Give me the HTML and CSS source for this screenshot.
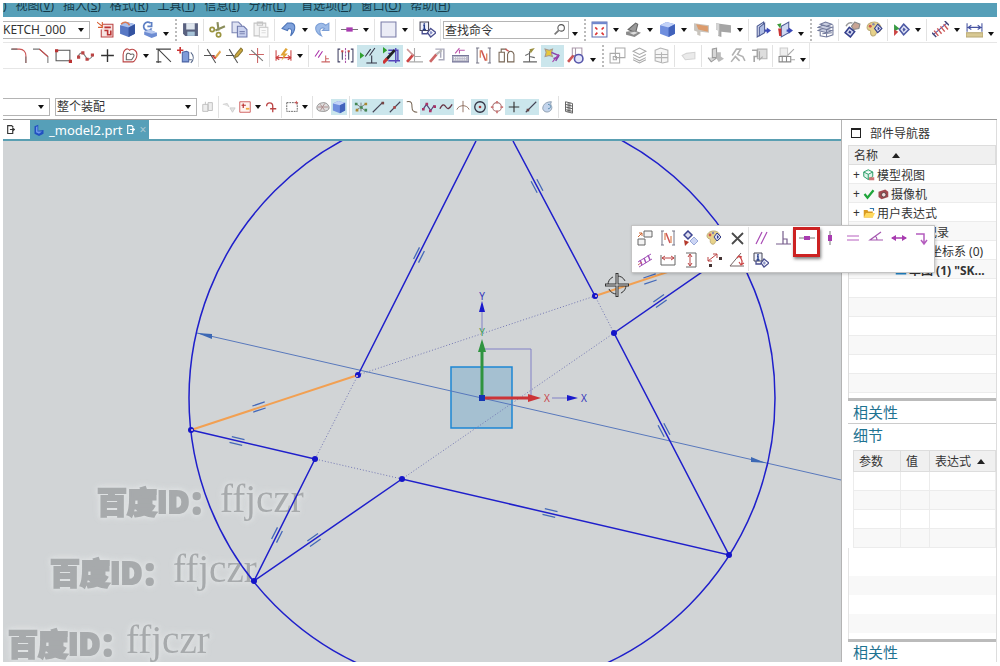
FILE: index.html
```html
<!DOCTYPE html>
<html lang="zh-CN">
<head>
    <meta charset="UTF-8">
    <meta name="viewport" content="width=device-width, initial-scale=1.0">
    <title>_model2.prt</title>
    <link rel="stylesheet" href="styles.css">
</head>
<body>
    <!-- 图标库 -->
    <svg class="icon-defs" aria-hidden="true">
        <symbol id="finish" viewBox="0 0 16 16"><path d="M5 3h10v12H4V8" fill="#f6e4e2" stroke="#b44"/><path d="M7 6h6M7 9h3v4h3V9" fill="none" stroke="#b33" stroke-width="1.5"/><path d="M0 1l5 4M5 1v5H1" fill="none" stroke="#d65a2c"/></symbol>
        <symbol id="cube-red" viewBox="0 0 16 16"><path d="M1 4l6-3 8 2v9l-6 3-8-3z" fill="#5878c4"/><path d="M1 4l8 2 6-3-8-2z" fill="#a9c1ee"/><path d="M9 6v9l6-3V3z" fill="#3453a0"/><path d="M2 3c3-3 6-2 8 1" fill="none" stroke="#d77a55" stroke-width="1.5"/></symbol>
        <symbol id="orient" viewBox="0 0 16 16"><path d="M9 2a4 4 0 1 0 1 5M10 1v4H6" fill="none" stroke="#5d7fc4" stroke-width="1.6"/><path d="M3 10l5-2 7 3v3l-5 2-7-3z" fill="#6d8cd2"/><path d="M3 10l5-2 7 3-5 1z" fill="#b7c8ee"/></symbol>
        <symbol id="save" viewBox="0 0 16 16"><path d="M1 2h14v12H3l-2-2z" fill="#59617f"/><path d="M4 2h8v6H4z" fill="#dfe6ee"/><path d="M5 10h7v4H5z" fill="#a7c4d8"/></symbol>
        <symbol id="cut" viewBox="0 0 16 16"><path d="M8 1l1 8M15 5L6 9" stroke="#8b8e5c" stroke-width="2"/><circle cx="3" cy="8" r="2" fill="none" stroke="#9a9440" stroke-width="1.6"/><circle cx="9" cy="13" r="2" fill="none" stroke="#9a9440" stroke-width="1.6"/></symbol>
        <symbol id="copy" viewBox="0 0 16 16"><path d="M1 1h6l3 3v7H1z" fill="#dfe3f3" stroke="#7d86b4"/><path d="M6 5h6l3 3v7H6z" fill="#c9d1ee" stroke="#6d78ad"/><path d="M8 10h5M8 12h5" stroke="#7d86b4"/></symbol>
        <symbol id="paste" viewBox="0 0 16 16"><path d="M1 2h11v12H1zM4 1h5v3H4z" fill="#f4f4f4" stroke="#c4c4c4"/><path d="M6 6h8v9H6z" fill="#fafafa" stroke="#cfcfcf"/><path d="M8 9h4M8 11h4" stroke="#ddd"/></symbol>
        <symbol id="undo" viewBox="0 0 16 16"><path d="M2 7l5-5h4c4 1 4 7-1 12 2-5 1-7-2-7l-1 2z" fill="#7fa2dc" stroke="#4c74b8"/></symbol>
        <symbol id="redo" viewBox="0 0 16 16"><path d="M14 9V2l-3 2C7 0 0 3 2 9c1 3 3 4 5 5-3-5-1-9 3-7L8 9z" fill="#9dbbe8" stroke="#7c9fd6"/></symbol>
        <symbol id="horiz" viewBox="0 0 16 16"><path d="M0 8h16" stroke="#777"/><path d="M5 6h6v4H5z" fill="#a83cb0"/></symbol>
        <symbol id="vert" viewBox="0 0 16 16"><path d="M8 1v14" stroke="#777"/><path d="M6 5h4v6H6z" fill="#a83cb0"/></symbol>
        <symbol id="square" viewBox="0 0 16 16"><path d="M1 1h14v14H1z" fill="#ebecf6" stroke="#7a7ca8"/></symbol>
        <symbol id="info" viewBox="0 0 16 16"><path d="M1 1h8v8H1z" fill="#eef0fa" stroke="#445"/><path d="M5 2v1M4 4h1v4M3.500 8h3" stroke="#223a88" stroke-width="1.400" fill="none"/><path d="M3 9v3h5M11 7l5 4-5 4-3-4z" fill="none" stroke="#4a4f90" stroke-width="1.300"/><path d="M11 9l2 2-2 2-1-2z" fill="#8b93c8"/></symbol>
        <symbol id="fit" viewBox="0 0 16 16"><path d="M1 1h14v14H1z" fill="#fff" stroke="#5c6fb0"/><path d="M1 1h14v2H1z" fill="#6f86cc"/><path d="M4 6l2 2m6-2l-2 2m-6 5l2-2m6 2l-2-2" stroke="#d33" stroke-width="1.500"/></symbol>
        <symbol id="section" viewBox="0 0 16 16"><path d="M3 8l7-6 2 1-2 8z" fill="#999" stroke="#666"/><path d="M1 10l8-1 6 2-6 4-8-2z" fill="#8a8a8a"/><path d="M4 11l5-1 3 1-4 2z" fill="#ddd"/></symbol>
        <symbol id="cube" viewBox="0 0 16 16"><path d="M1 4l6-3 8 2v9l-6 3-8-3z" fill="#6f8ede"/><path d="M1 4l8 2 6-3-8-2z" fill="#c2d2f8"/><path d="M9 6v9l6-3V3z" fill="#4162bb"/></symbol>
        <symbol id="wall-orange" viewBox="0 0 16 16"><path d="M1 2l14 2v7l-8-1v4l-3-1v-3l-3-1z" fill="#c9c4bd"/><path d="M3 3l11 2v5L5 8z" fill="#dc9b6c"/></symbol>
        <symbol id="wall-grey" viewBox="0 0 16 16"><path d="M1 2l14 2v7l-9-1v5l-3-1V9L1 8z" fill="#a5a5a5"/><path d="M1 2l3 1v11l-1-1V9L1 8z" fill="#d5d5d5"/></symbol>
        <symbol id="sheet" viewBox="0 0 16 16"><path d="M3 5l6-4v10l-6 4z" fill="#dfe5f6" stroke="#4e5c94"/><path d="M5 6l5-4v9l-5 3z" fill="#aebce2" stroke="#4e5c94"/><path d="M10 8h2V6l4 3-4 3v-2h-2z" fill="#3b49b8"/></symbol>
        <symbol id="sheet-rg" viewBox="0 0 16 16"><path d="M5 5l7-4v10l-7 4z" fill="#cfd8f2" stroke="#4e5c94"/><path d="M1 3l4-1-1 5z" fill="#3d9b3a"/><path d="M2 7h3v7H3z" fill="#c33"/><path d="M10 8h2V6l4 3-4 3v-2h-2z" fill="#3b49b8"/></symbol>
        <symbol id="layers" viewBox="0 0 16 16"><path d="M3 3l5-2 6 2-5 2zM1 6l4-2 9 2-5 2zM1 9l4-2 9 2-5 2z" fill="#c9cee0" stroke="#727a9c"/><path d="M3 10v4l6 1 6-2V4M5 12l9-1M9 8v7" fill="none" stroke="#727a9c"/></symbol>
        <symbol id="gears" viewBox="0 0 16 16"><path d="M10 1l5 2-1 4-5 1-2-3z" fill="#c8a494" stroke="#888"/><path d="M5 6l5 4-4 5-5-4z" fill="#d6daf2" stroke="#343f8c" stroke-width="1.500"/><path d="M5 9l2 1-1 2-2-1z" fill="#343f8c"/><path d="M2 5c1-3 4-4 6-3" fill="none" stroke="#999" stroke-width="1.500"/></symbol>
        <symbol id="palette" viewBox="0 0 16 16"><path d="M8 1C3 1 1 4 1 6s2 3 3 3-1 4 2 5 3-2 4-3 4 0 4-4-3-6-6-6z" fill="#e7d28a" stroke="#bfae7c"/><circle cx="4" cy="5" r="1.400" fill="#c55"/><circle cx="7" cy="3" r="1.200" fill="#88a"/><path d="M11 3l4 4-4 4-3-4z" fill="#d6daf2" stroke="#343f8c"/><path d="M11 5l2 2-2 2z" fill="#343f8c"/></symbol>
        <symbol id="animate" viewBox="0 0 16 16"><path d="M1 3l5 4-5 3z" fill="#379a42"/><path d="M1 8l4 2-4 4z" fill="#c44"/><path d="M10 3l5 5-5 5-4-5z" fill="#dfe3f6" stroke="#4e5aa4" stroke-width="1.500"/><path d="M10 6l2 2-2 2-1-2z" fill="#4e5aa4"/></symbol>
        <symbol id="measure-x" viewBox="0 0 16 16"><path d="M1 13L14 2" stroke="#55a"/><path d="M2 9l4 5M5 7l4 5M8 5l4 5M11 3l4 5" stroke="#c55" stroke-width="1.300"/><path d="M0 11l4 4M12 0l4 4" stroke="#447" stroke-width="1.400"/></symbol>
        <symbol id="ruler" viewBox="0 0 16 16"><path d="M1 2v8M15 2v8M2 6h12M5 4L2 6l3 2M11 4l3 2-3 2" fill="none" stroke="#4552a0"/><path d="M0 11h16v4H0z" fill="#d8c993" stroke="#b5a570"/></symbol>
        <symbol id="fillet" viewBox="0 0 16 16"><path d="M1 2h7c4 0 6 3 6 6v7" fill="none" stroke="#c55"/><path d="M0 2h6M14 9v6" stroke="#777"/></symbol>
        <symbol id="chamfer" viewBox="0 0 16 16"><path d="M0 2h6l8 7v6" fill="none" stroke="#777"/><path d="M6 2l8 7" stroke="#c44"/></symbol>
        <symbol id="rect" viewBox="0 0 16 16"><path d="M1 3h13v10H1z" fill="none" stroke="#555"/><path d="M0 2h3v3H0zM13 12h3v3h-3z" fill="#b33"/></symbol>
        <symbol id="spline" viewBox="0 0 16 16"><path d="M1 9c2-5 5-4 7 0s4 3 7-1" fill="none" stroke="#777"/><path d="M0 8h3v3H0zM4 4h3v3H4zM8 10h3v3H8zM13 6h3v3h-3z" fill="#b44"/></symbol>
        <symbol id="plus" viewBox="0 0 16 16"><path d="M8 2v12M2 8h12" stroke="#333" stroke-width="1.300"/></symbol>
        <symbol id="offset" viewBox="0 0 16 16"><path d="M2 14V7c0-4 4-7 6-4 3-2 7 0 7 4 0 3-2 7-4 7z" fill="none" stroke="#b44"/><path d="M5 12V8c0-2 2-3 4-1 2-1 4 0 3 2l-2 3z" fill="none" stroke="#666"/></symbol>
        <symbol id="derive" viewBox="0 0 16 16"><path d="M1 2h14M3 2v13M3 2l12 12M1 14h5" fill="none" stroke="#444"/></symbol>
        <symbol id="pattern" viewBox="0 0 16 16"><path d="M3 0v6M0 3h6" stroke="#c33" stroke-width="1.500"/><path d="M5 5l4-1 2 1v9H5z" fill="#7f9bd8" stroke="#4c64a4"/><path d="M13 5c3 3 3 7 0 10M11 12h3" fill="none" stroke="#568"/></symbol>
        <symbol id="trim" viewBox="0 0 16 16"><path d="M3 2l8 13M0 8h10" fill="none" stroke="#555"/><path d="M15 3l-4 5-2 3 3-1 4-5z" fill="#e2a44e"/><path d="M8 8l3 3" stroke="#c33" stroke-width="1.500"/></symbol>
        <symbol id="extend" viewBox="0 0 16 16"><path d="M3 2l8 13M0 8h8" fill="none" stroke="#555"/><path d="M14 1L9 7l-1 3 3-1 5-6z" fill="#cda83e" stroke="#8c7a35"/></symbol>
        <symbol id="corner" viewBox="0 0 16 16"><path d="M9 1v14M1 7h14" stroke="#c66"/><path d="M3 3l11 10" stroke="#777"/></symbol>
        <symbol id="quickdim" viewBox="0 0 16 16"><path d="M1 3v10M15 3v10M1 10h14M4 8l-3 2 3 2M12 8l3 2-3 2" fill="none" stroke="#c44"/><path d="M10 1L5 8h3l-2 5 6-7H9l3-4z" fill="#e0a436"/></symbol>
        <symbol id="geo" viewBox="0 0 16 16"><path d="M1 9l4-6M4 10l4-6" stroke="#a3a"/><path d="M7 14h8M11 14V8M11 11h3" fill="none" stroke="#c66"/></symbol>
        <symbol id="symmetric" viewBox="0 0 16 16"><path d="M3 2H1v12h2M13 2h2v12h-2M5 4v8M11 4v8" fill="none" stroke="#446"/><path d="M8 1v14" stroke="#a5a" stroke-dasharray="2 1"/><path d="M4 4h2M10 4h2" stroke="#c44" stroke-width="2"/></symbol>
        <symbol id="show-con" viewBox="0 0 16 16"><path d="M0 5l4 3-4 3z" fill="#2fa02f"/><path d="M5 9l5-7M9 8l5-7M11 15V8M6 15h10" fill="none" stroke="#334"/></symbol>
        <symbol id="auto-con" viewBox="0 0 16 16"><path d="M0 0l4 3-4 3z" fill="#2fa02f"/><path d="M5 3h9v10H6M12 1v14M5 13h11M5 6h4" fill="none" stroke="#54b" stroke-width="1.300"/><path d="M3 12l8-9" stroke="#222" stroke-width="2.500"/><path d="M0 15l4-4" stroke="#c33" stroke-width="3"/></symbol>
        <symbol id="tool-l" viewBox="0 0 16 16"><path d="M8 1v13M3 14h13M8 9h6" fill="none" stroke="#aaa"/><path d="M1 14l6-7" stroke="#c44" stroke-width="2.500"/><path d="M1 2l6 6" stroke="#c99" stroke-width="1.500"/></symbol>
        <symbol id="tool-box" viewBox="0 0 16 16"><path d="M6 2h8v10H9M11 2v8" fill="none" stroke="#aab" stroke-width="1.400"/><path d="M1 14l6-7" stroke="#c66" stroke-width="2.500"/><path d="M7 7l5-4" stroke="#bbb" stroke-width="2"/></symbol>
        <symbol id="infer" viewBox="0 0 16 16"><path d="M0 8h16v6H0z" fill="#b9b9c8" stroke="#779"/><path d="M2 10h12M2 12h12" stroke="#fff" stroke-dasharray="1 1"/><path d="M3 6l4-5M7 6V3h5" fill="none" stroke="#b5a"/></symbol>
        <symbol id="convert" viewBox="0 0 16 16"><path d="M1 1h3M1 15h3M2 1v14M12 1h3M12 15h3M14 1v14" stroke="#778"/><path d="M6 3l4 10" stroke="#c55" stroke-width="1.500"/><path d="M5 3v7M11 6v7" stroke="#e28a60" stroke-width="1.300"/></symbol>
        <symbol id="alter" viewBox="0 0 16 16"><path d="M1 14V5h5v9zM9 14V7c1-4 5-4 6 0v7zM3 5V2h5" fill="none" stroke="#765"/><path d="M7 2l3 2" stroke="#c55" stroke-width="1.400"/></symbol>
        <symbol id="figure" viewBox="0 0 16 16"><path d="M8 4v10M2 14h13M8 9l5 1M8 6l-4 2" fill="none" stroke="#666"/><path d="M8 2l5-1-4 5z" fill="#9a8f40"/></symbol>
        <symbol id="spark" viewBox="0 0 16 16"><path d="M1 2l4 1 3-1-1 4 1 3-3-1-4 1 1-4z" fill="#e6c83c" stroke="#a98"/><path d="M7 5l7 3-3 5M9 11l5-2" fill="none" stroke="#84a" stroke-width="1.400"/><path d="M8 14l6-7" stroke="#a4a"/></symbol>
        <symbol id="relations" viewBox="0 0 16 16"><path d="M5 1h9v7H5zM8 1v9" fill="none" stroke="#a9a"/><circle cx="11" cy="11" r="4" fill="#e4e6fa" stroke="#55a" stroke-width="1.500"/><path d="M1 14l5-6" stroke="#c55" stroke-width="2.500"/></symbol>
        <symbol id="g-frames" viewBox="0 0 16 16"><path d="M6 1h9v9H6zM1 6h9v9H1zM4 9h3v3H4z" fill="none" stroke="#aaa"/></symbol>
        <symbol id="g-stack" viewBox="0 0 16 16"><path d="M2 4l6-3 6 3-6 3zM2 7l6 3 6-3M2 10l6 3 6-3M2 12l6 3 6-3" fill="none" stroke="#aaa"/></symbol>
        <symbol id="g-layers" viewBox="0 0 16 16"><path d="M2 3l5-2 7 2v11l-5 1-7-2zM2 7h12M2 10h12M8 5v10" fill="#f6f6f6" stroke="#b4b4b4"/></symbol>
        <symbol id="g-blob" viewBox="0 0 16 16"><path d="M2 8l4-2 8-1v6l-9 1z" fill="#eaeaea" stroke="#d4d4d4"/></symbol>
        <symbol id="g-check" viewBox="0 0 16 16"><path d="M5 2l4-1v9H5zM1 10l3 4 7-5" fill="#d6d6d6" stroke="#9a9a9a"/><path d="M9 5h4v4l3 2-5 3-2-3" fill="#bbb"/></symbol>
        <symbol id="g-net" viewBox="0 0 16 16"><path d="M3 8l4-6h4l-3 5 5 2 2 4M2 14l4-5 4 4" fill="none" stroke="#b2b2b2" stroke-width="1.500"/></symbol>
        <symbol id="g-flag" viewBox="0 0 16 16"><path d="M6 2h9v9H6z" fill="#ddd" stroke="#b4b4b4"/><path d="M1 3h5v6H3v5" fill="none" stroke="#a6a6a6" stroke-width="1.500"/><path d="M8 4v8l3-3" fill="none" stroke="#aaa"/></symbol>
        <symbol id="g-table" viewBox="0 0 16 16"><path d="M2 1h7v7H2z" fill="#eee" stroke="#ccc"/><path d="M1 9h11v5H1zM4 9v5M8 9v5" fill="#fff" stroke="#8a8a8a"/><path d="M9 8l6-6M12 12h4" stroke="#aaa"/></symbol>
        <symbol id="g-asm" viewBox="0 0 16 16"><path d="M2 5h6v8H2zM8 3h5v9H8zM5 2v3" fill="#eee" stroke="#bbb"/></symbol>
        <symbol id="g-filter" viewBox="0 0 16 16"><path d="M1 5l5-1 2 4M9 9h6l-3 5z" fill="#e4e4e4" stroke="#ccc"/></symbol>
        <symbol id="sel-red" viewBox="0 0 16 16"><path d="M2 2h12v12H2z" fill="#fff4f0" stroke="#c55"/><path d="M6 4v5M4 6h5" stroke="#b33" stroke-width="1.400"/><path d="M9 10h4" stroke="#ea4" stroke-width="2"/></symbol>
        <symbol id="sel-hook" viewBox="0 0 16 16"><path d="M3 7c0-5 7-5 7 0v5M7 10h7M10 8v6" fill="none" stroke="#b44" stroke-width="1.500"/></symbol>
        <symbol id="marquee" viewBox="0 0 16 16"><path d="M2 3h12v10H2z" fill="none" stroke="#555" stroke-dasharray="2 1"/><path d="M13 1v4M11 3h4" stroke="#c55"/></symbol>
        <symbol id="mesh" viewBox="0 0 16 16"><path d="M1 9c0-4 4-6 8-6s6 4 6 6-3 4-6 4-8 0-8-4z" fill="#ddd" stroke="#888"/><path d="M5 5l5 7M10 4l-5 8M2 8h12" stroke="#a88"/></symbol>
        <symbol id="snap-net" viewBox="0 0 16 16"><path d="M2 4l12 9M2 12l12-8M8 3v10" stroke="#777"/><path d="M1 3h3v3H1zM7 7h3v3H7zM12 10h3v3h-3z" fill="#485"/><path d="M12 3h3v3h-3zM2 10h3v3H2z" fill="#a83"/></symbol>
        <symbol id="seg" viewBox="0 0 16 16"><path d="M2 14L13 3" stroke="#445" stroke-width="1.300"/><path d="M12 2h3v3h-3z" fill="#744"/></symbol>
        <symbol id="seg-mid" viewBox="0 0 16 16"><path d="M2 14L14 2" stroke="#445" stroke-width="1.300"/><path d="M6 7h3v3H6z" fill="#a44"/></symbol>
        <symbol id="seg-low" viewBox="0 0 16 16"><path d="M2 14L14 2" stroke="#445" stroke-width="1.300"/><path d="M3 10h3v3H3z" fill="#644"/></symbol>
        <symbol id="scurve" viewBox="0 0 16 16"><path d="M2 2c6-1 6 2 6 6s1 6 6 6" fill="none" stroke="#765" stroke-width="1.200"/></symbol>
        <symbol id="wave" viewBox="0 0 16 16"><path d="M1 10c3-6 5-5 7-2s4 2 7-3" fill="none" stroke="#634" stroke-width="1.500"/></symbol>
        <symbol id="wave-dots" viewBox="0 0 16 16"><path d="M1 11l4-6 5 7 4-6" fill="none" stroke="#547" stroke-width="1.400"/><path d="M4 3h3v3H4zM8 11h3v3H8zM13 6h3v3h-3zM0 9h3v3H0z" fill="#a36"/></symbol>
        <symbol id="cross-arc" viewBox="0 0 16 16"><path d="M8 1v13M1 11c2-6 12-6 14 0" fill="none" stroke="#865"/></symbol>
        <symbol id="circle-dot" viewBox="0 0 16 16"><circle cx="8" cy="8" r="6" fill="none" stroke="#334" stroke-width="1.500"/><circle cx="8" cy="8" r="1.500" fill="#a33"/></symbol>
        <symbol id="quadrant" viewBox="0 0 16 16"><circle cx="8" cy="8" r="5" fill="none" stroke="#a77" stroke-width="1.200"/><path d="M7 1h2v3H7zM7 12h2v3H7zM1 7h3v2H1zM12 7h3v2h-3z" fill="#c77"/></symbol>
        <symbol id="face-pt" viewBox="0 0 16 16"><path d="M2 10c0-6 5-8 10-8-3 4 3 5-1 10-3 3-8 2-9-2z" fill="#c3d4ec" stroke="#89a"/><path d="M8 5c4 0 4 5 0 5" fill="none" stroke="#58a"/></symbol>
        <symbol id="grid" viewBox="0 0 16 16"><path d="M4 2l8 2v11l-8-2zM7 3v11M9 3v11M4 5l8 2M4 8l8 2M4 11l8 2" fill="none" stroke="#555"/></symbol>
        <symbol id="page" viewBox="0 0 16 16"><path d="M12 10v5H3V1h7l3 3" fill="none" stroke="currentColor" stroke-width="2"/><path d="M7 8h7M11 5l4 3-4 3" fill="none" stroke="currentColor" stroke-width="2"/></symbol>
        <symbol id="part" viewBox="0 0 16 16"><path d="M2 3l5-2v8l7-1v5l-6 3-6-3z" fill="#2150c0"/><path d="M4 4l2-1v7l6 0-4 3-4-2z" fill="#6c97ec"/></symbol>
        <symbol id="boxes" viewBox="0 0 16 16"><path d="M7 1h8v6H7zM1 9h7v6H1z" fill="#f4f4f4" stroke="#666"/><path d="M1 7l4-4M5 6V3H2" fill="none" stroke="#c63"/></symbol>
        <symbol id="diamonds" viewBox="0 0 16 16"><path d="M5 1l4 4-4 4-4-4z" fill="#dde" stroke="#3b4390" stroke-width="1.500"/><path d="M11 7l4 4-4 4-4-4z" fill="#ccd5f4" stroke="#99a8d8"/><path d="M1 10l5 2-4 4z" fill="#b43a2c"/></symbol>
        <symbol id="delete" viewBox="0 0 16 16"><path d="M3 3l11 11M14 3L3 14" stroke="#4a4a4a" stroke-width="1.800"/></symbol>
        <symbol id="parallel" viewBox="0 0 16 16"><path d="M3 14L9 2M8 14l6-12" stroke="#a94bb5" stroke-width="1.200"/></symbol>
        <symbol id="perp" viewBox="0 0 16 16"><path d="M7 1v13M0 14h15M7 9h4v5" fill="none" stroke="#765c8c" stroke-width="1.200"/></symbol>
        <symbol id="equal" viewBox="0 0 16 16"><path d="M2 6h12M2 10h12" stroke="#b860c0" stroke-width="1.200"/></symbol>
        <symbol id="angle" viewBox="0 0 16 16"><path d="M13 2L2 10h13M7 6c2 1 2 3 2 4" fill="none" stroke="#a558b0" stroke-width="1.200"/></symbol>
        <symbol id="width" viewBox="0 0 16 16"><path d="M1 8h14" stroke="#a83cb0" stroke-width="1.500"/><path d="M0 8l5-3v6zM16 8l-5-3v6z" fill="#a83cb0"/></symbol>
        <symbol id="drop" viewBox="0 0 16 16"><path d="M2 4h8v9M7 10l3 4 3-4" fill="none" stroke="#b45cbe" stroke-width="1.500"/></symbol>
        <symbol id="multi" viewBox="0 0 16 16"><path d="M1 10L14 2M2 15L15 7" stroke="#a252b8"/><path d="M3 8l2 5M7 6l2 5M11 3l2 5" stroke="#a252b8" stroke-width="1.500"/><path d="M1 13l4-3" stroke="#c66"/></symbol>
        <symbol id="dim-h" viewBox="0 0 16 16"><path d="M1 3v10h14V3" fill="none" stroke="#666"/><path d="M2 6h12M5 4L2 6l3 2M11 4l3 2-3 2" fill="none" stroke="#b44"/></symbol>
        <symbol id="dim-v" viewBox="0 0 16 16"><path d="M3 1h10v14H3" fill="none" stroke="#666"/><path d="M7 2v12M5 5l2-3 2 3M5 11l2 3 2-3" fill="none" stroke="#b44"/></symbol>
        <symbol id="dim-p" viewBox="0 0 16 16"><path d="M2 9l9-7M2 5v4h4M7 2h4v4" fill="none" stroke="#b44"/><path d="M3 12h3v3H3zM13 5h3v3h-3z" fill="#433"/></symbol>
        <symbol id="dim-a" viewBox="0 0 16 16"><path d="M12 1L1 14h14" fill="none" stroke="#766"/><path d="M10 4c3 3 4 6 2 9M8 6l2-2 3 1M10 10l2 3 3-2" fill="none" stroke="#c44" stroke-width="1.200"/></symbol>
        <symbol id="view" viewBox="0 0 16 16"><path d="M7 1l6 3v6l-6 4-6-4V4zM1 4l6 3 6-3M7 7v7" fill="#e0f4ea" stroke="#2a9d68" stroke-width="1.300"/><path d="M8 11h7v4H8z" fill="#c77"/></symbol>
        <symbol id="tick" viewBox="0 0 16 16"><path d="M2 8l4 5 8-10" fill="none" stroke="#1fa53a" stroke-width="3"/></symbol>
        <symbol id="camera" viewBox="0 0 16 16"><path d="M2 5l9-3 4 3v7l-9 3-4-3z" fill="#a04a50"/><circle cx="9" cy="9" r="3" fill="#edd" stroke="#433"/></symbol>
        <symbol id="folder" viewBox="0 0 16 16"><path d="M1 4h5l1 2h6v8H1z" fill="#d99b22"/><path d="M4 8h12l-3 6H1z" fill="#ffd95e"/><path d="M9 2h5v3" fill="none" stroke="#37a" stroke-width="1.500"/></symbol>
        <symbol id="sketch" viewBox="0 0 16 16"><path d="M1 13h14M3 13V5l8-2v10" fill="none" stroke="#28c" stroke-width="2"/></symbol>
        <symbol id="lens" viewBox="0 0 16 16"><circle cx="10" cy="6" r="4" fill="none" stroke="#555" stroke-width="1.300"/><path d="M7 9l-5 5" stroke="#777" stroke-width="2"/></symbol>
    </svg>

    <nav class="menu-bar">
        <a href="#">)</a>
        <a href="#">视图(<u>V</u>)</a>
        <a href="#">插入(<u>S</u>)</a>
        <a href="#">格式(<u>R</u>)</a>
        <a href="#">工具(<u>T</u>)</a>
        <a href="#">信息(<u>I</u>)</a>
        <a href="#">分析(<u>L</u>)</a>
        <a class="menu-pref" href="#">首选项(<u>P</u>)</a>
        <a href="#">窗口(<u>O</u>)</a>
        <a href="#">帮助(<u>H</u>)</a>
    </nav>

    <!-- 标准工具条 -->
    <div class="toolbar">
        <div class="combo combo-sketch"><select aria-label="草图名"><option>KETCH_000</option></select></div>
        <button class="tool" aria-label="完成草图"><svg><use href="#finish"/></svg></button>
        <button class="tool" aria-label="定向视图"><svg><use href="#cube-red"/></svg></button>
        <button class="tool" aria-label="重新附着"><svg><use href="#orient"/></svg></button>
        <button class="arrow low" aria-label="更多"></button>
        <span class="handle"></span>
        <button class="tool" aria-label="保存"><svg><use href="#save"/></svg></button>
        <span class="sep"></span>
        <button class="tool" aria-label="剪切"><svg><use href="#cut"/></svg></button>
        <button class="tool" aria-label="复制"><svg><use href="#copy"/></svg></button>
        <button class="tool" aria-label="粘贴"><svg><use href="#paste"/></svg></button>
        <span class="sep"></span>
        <button class="tool" aria-label="撤消"><svg><use href="#undo"/></svg></button>
        <button class="arrow" aria-label="撤消列表"></button>
        <button class="tool" aria-label="重做"><svg><use href="#redo"/></svg></button>
        <span class="sep"></span>
        <button class="tool" aria-label="水平"><svg><use href="#horiz"/></svg></button>
        <button class="arrow" aria-label="更多"></button>
        <span class="sep"></span>
        <button class="tool" aria-label="窗口"><svg><use href="#square"/></svg></button>
        <button class="arrow" aria-label="更多"></button>
        <span class="sep"></span>
        <button class="tool" aria-label="信息"><svg><use href="#info"/></svg></button>
        <span class="sep"></span>
        <label class="search"><input type="text" value="查找命令" aria-label="查找命令"><svg><use href="#lens"/></svg></label>
        <button class="arrow low" aria-label="更多"></button>
        <span class="handle"></span>
        <button class="tool" aria-label="适合窗口"><svg><use href="#fit"/></svg></button>
        <button class="arrow" aria-label="更多"></button>
        <button class="tool" aria-label="截面"><svg><use href="#section"/></svg></button>
        <button class="arrow" aria-label="更多"></button>
        <button class="tool" aria-label="着色"><svg><use href="#cube"/></svg></button>
        <button class="arrow" aria-label="更多"></button>
        <button class="tool" aria-label="面分析"><svg><use href="#wall-orange"/></svg></button>
        <button class="tool" aria-label="背景"><svg><use href="#wall-grey"/></svg></button>
        <button class="arrow" aria-label="更多"></button>
        <span class="sep"></span>
        <button class="tool" aria-label="编辑截面"><svg><use href="#sheet"/></svg></button>
        <button class="tool" aria-label="剪切截面"><svg><use href="#sheet-rg"/></svg></button>
        <button class="arrow low" aria-label="更多"></button>
        <span class="handle"></span>
        <button class="tool" aria-label="图层设置"><svg><use href="#layers"/></svg></button>
        <span class="sep"></span>
        <button class="tool" aria-label="显示和隐藏"><svg><use href="#gears"/></svg></button>
        <button class="tool" aria-label="编辑对象显示"><svg><use href="#palette"/></svg></button>
        <span class="sep"></span>
        <button class="tool" aria-label="移动对象"><svg><use href="#animate"/></svg></button>
        <button class="arrow" aria-label="更多"></button>
        <span class="sep"></span>
        <button class="tool" aria-label="测量"><svg><use href="#measure-x"/></svg></button>
        <button class="arrow" aria-label="更多"></button>
        <button class="tool" aria-label="测量距离"><svg><use href="#ruler"/></svg></button>
        <button class="arrow low" aria-label="更多"></button>
    </div>

    <!-- 草图工具条 -->
    <div class="toolbar toolbar-sketch">
        <button class="tool" aria-label="圆角"><svg><use href="#fillet"/></svg></button>
        <button class="tool" aria-label="倒斜角"><svg><use href="#chamfer"/></svg></button>
        <button class="tool" aria-label="矩形"><svg><use href="#rect"/></svg></button>
        <button class="tool" aria-label="艺术样条"><svg><use href="#spline"/></svg></button>
        <button class="tool" aria-label="点"><svg><use href="#plus"/></svg></button>
        <button class="tool" aria-label="偏置曲线"><svg><use href="#offset"/></svg></button>
        <button class="arrow" aria-label="更多"></button>
        <button class="tool" aria-label="派生直线"><svg><use href="#derive"/></svg></button>
        <button class="tool" aria-label="阵列曲线"><svg><use href="#pattern"/></svg></button>
        <span class="sep"></span>
        <button class="tool" aria-label="快速修剪"><svg><use href="#trim"/></svg></button>
        <button class="tool" aria-label="快速延伸"><svg><use href="#extend"/></svg></button>
        <button class="tool" aria-label="制作拐角"><svg><use href="#corner"/></svg></button>
        <span class="sep"></span>
        <button class="tool" aria-label="快速尺寸"><svg><use href="#quickdim"/></svg></button>
        <button class="arrow" aria-label="更多"></button>
        <span class="sep"></span>
        <div class="constraints">
            <button class="tool" aria-label="几何约束"><svg><use href="#geo"/></svg></button>
            <button class="tool" aria-label="设为对称"><svg><use href="#symmetric"/></svg></button>
            <button class="tool on" aria-label="显示草图约束"><svg><use href="#show-con"/></svg></button>
            <button class="tool on" aria-label="显示自动尺寸"><svg><use href="#auto-con"/></svg></button>
            <button class="tool" aria-label="自动约束"><svg><use href="#tool-l"/></svg></button>
            <button class="tool" aria-label="自动标注尺寸"><svg><use href="#tool-box"/></svg></button>
            <button class="tool" aria-label="推断约束"><svg><use href="#infer"/></svg></button>
            <button class="tool" aria-label="转换参考"><svg><use href="#convert"/></svg></button>
            <button class="tool" aria-label="备选解"><svg><use href="#alter"/></svg></button>
            <button class="tool" aria-label="动画"><svg><use href="#figure"/></svg></button>
            <button class="tool on" aria-label="创建自动约束"><svg><use href="#spark"/></svg></button>
            <button class="tool" aria-label="关系浏览器"><svg><use href="#relations"/></svg></button>
        </div>
        <button class="arrow low" aria-label="更多"></button>
        <span class="handle"></span>
        <button class="tool" aria-label="组件"><svg><use href="#g-frames"/></svg></button>
        <button class="tool" aria-label="堆叠"><svg><use href="#g-stack"/></svg></button>
        <button class="tool" aria-label="图层"><svg><use href="#g-layers"/></svg></button>
        <span class="sep"></span>
        <button class="tool" aria-label="曲面"><svg><use href="#g-blob"/></svg></button>
        <span class="sep"></span>
        <button class="tool" aria-label="添加组件"><svg><use href="#g-check"/></svg></button>
        <button class="tool" aria-label="装配约束"><svg><use href="#g-net"/></svg></button>
        <button class="tool" aria-label="移动组件"><svg><use href="#g-flag"/></svg></button>
        <span class="sep"></span>
        <button class="tool" aria-label="装配明细"><svg><use href="#g-table"/></svg></button>
        <button class="arrow low" aria-label="更多"></button>
    </div>

    <!-- 选择条 -->
    <div class="toolbar toolbar-select">
        <div class="combo combo-filter"><select aria-label="类型过滤器"><option></option></select></div>
        <div class="combo combo-scope"><select aria-label="选择范围"><option>整个装配</option></select></div>
        <button class="tool" aria-label="装配范围"><svg><use href="#g-asm"/></svg></button>
        <span class="sep"></span>
        <button class="tool" aria-label="过滤器"><svg><use href="#g-filter"/></svg></button>
        <button class="tool" aria-label="选择优先级"><svg><use href="#sel-red"/></svg></button>
        <button class="arrow" aria-label="更多"></button>
        <button class="tool" aria-label="返回"><svg><use href="#sel-hook"/></svg></button>
        <span class="sep"></span>
        <button class="tool" aria-label="框选"><svg><use href="#marquee"/></svg></button>
        <button class="arrow" aria-label="更多"></button>
        <span class="sep"></span>
        <button class="tool" aria-label="小平面"><svg><use href="#mesh"/></svg></button>
        <button class="tool on" aria-label="实体"><svg><use href="#cube"/></svg></button>
        <span class="sep"></span>
        <div class="snaps">
            <button class="tool on" aria-label="启用捕捉点"><svg><use href="#snap-net"/></svg></button>
            <button class="tool on" aria-label="端点"><svg><use href="#seg"/></svg></button>
            <button class="tool on" aria-label="中点"><svg><use href="#seg-mid"/></svg></button>
            <button class="tool" aria-label="控制点"><svg><use href="#scurve"/></svg></button>
            <button class="tool on" aria-label="极点"><svg><use href="#wave-dots"/></svg></button>
            <button class="tool on" aria-label="定义点"><svg><use href="#wave"/></svg></button>
            <button class="tool" aria-label="交点"><svg><use href="#cross-arc"/></svg></button>
            <button class="tool on" aria-label="圆心"><svg><use href="#circle-dot"/></svg></button>
            <button class="tool" aria-label="象限点"><svg><use href="#quadrant"/></svg></button>
            <button class="tool on" aria-label="现有点"><svg><use href="#plus"/></svg></button>
            <button class="tool on" aria-label="曲线上的点"><svg><use href="#seg-low"/></svg></button>
            <button class="tool" aria-label="面上的点"><svg><use href="#face-pt"/></svg></button>
        </div>
        <span class="sep"></span>
        <button class="tool" aria-label="栅格点"><svg><use href="#grid"/></svg></button>
    </div>

    <main class="workspace">
        <section class="editor">
            <div class="tabs">
                <button class="tab" aria-label="部件"><svg><use href="#page"/></svg></button>
                <button class="tab active"><svg class="part-icon"><use href="#part"/></svg>_model2.prt<svg><use href="#page"/></svg><span class="close">×</span></button>
            </div>

            <div class="canvas">
                <svg class="drawing" viewBox="3 141 838 521" preserveAspectRatio="xMinYMin slice">
                    <defs>
                        <g id="eq"><path d="M-6 -3h13M-7 3h13"/></g>
                    </defs>
                    <g class="watermark">
                        <text class="wm-label" x="97" y="513">百度ID：</text><text class="wm-name" x="220" y="512">ffjczr</text>
                        <text class="wm-label" x="50" y="584">百度ID：</text><text class="wm-name" x="173" y="582">ffjczr</text>
                        <text class="wm-label" x="8" y="655">百度ID：</text><text class="wm-name" x="126" y="653">ffjczr</text>
                    </g>
                    <rect class="csys-plane" x="451" y="367" width="61" height="61"/>
                    <path class="ref-line" d="M358 375L595 296L614 333L402 479L315 459Z"/>
                    <path class="dim-line" d="M197 333L841 480"/>
                    <path class="dim-head" d="M197 333l15 1v5zM766 463l-15 -6v5z"/>
                    <circle class="curve" cx="482" cy="398" r="293"/>
                    <path class="curve" d="M476 141L358 375M513 141L595 296M731 252L614 333L729 555L402 479L254 581L315 459L191 430"/>
                    <path class="picked" d="M191 430L358 375M595 296L731 251"/>
                    <g class="eq-marks">
                        <use href="#eq" transform="translate(259 407) rotate(-18)"/>
                        <use href="#eq" transform="translate(237 441) rotate(13)"/>
                        <use href="#eq" transform="translate(419 255) rotate(-63)"/>
                        <use href="#eq" transform="translate(537 186) rotate(62)"/>
                        <use href="#eq" transform="translate(650 279) rotate(-18)"/>
                        <use href="#eq" transform="translate(660 301) rotate(-35)"/>
                        <use href="#eq" transform="translate(664 430) rotate(62)"/>
                        <use href="#eq" transform="translate(550 513) rotate(13)"/>
                        <use href="#eq" transform="translate(314 540) rotate(-35)"/>
                        <use href="#eq" transform="translate(277 535) rotate(-63)"/>
                    </g>
                    <g class="points">
                        <circle cx="358" cy="375" r="3"/><circle cx="595" cy="296" r="3"/>
                        <circle cx="614" cy="333" r="3"/><circle cx="729" cy="555" r="3"/>
                        <circle cx="402" cy="479" r="3"/><circle cx="254" cy="581" r="3"/>
                        <circle cx="315" cy="459" r="3"/><circle cx="191" cy="430" r="3"/>
                    </g>
                    <g class="point-cores">
                        <circle cx="357" cy="376" r="1"/><circle cx="596" cy="296" r="1"/><circle cx="192" cy="430" r="1"/>
                    </g>

                    <!-- 坐标系 -->
                    <path class="csys-thin" d="M482 349h49v47M482 330v-20M552 398h16"/>
                    <path d="M482 301l3 11h-6zM578 398l-11 -3v6z" fill="#1a1acc"/>
                    <path d="M482 398v-46" stroke="#2f9440" stroke-width="3"/>
                    <path d="M482 339l4 13h-8z" fill="#2f9440"/>
                    <path d="M482 398h48" stroke="#cc3438" stroke-width="3"/>
                    <path d="M541 398l-13 -4v8z" fill="#cc3438"/>
                    <rect x="479" y="395" width="6" height="6" fill="#1536b4"/>
                    <g class="axis-names">
                        <text x="482" y="300" fill="#3434bb">Y</text>
                        <text x="482" y="336" fill="#3f9a55">Y</text>
                        <text x="547" y="402" fill="#c8484c">X</text>
                        <text x="584" y="402" fill="#3434bb">X</text>
                    </g>

                    <!-- 光标 -->
                    <g class="cursor">
                        <circle cx="617" cy="285" r="9"/>
                        <path class="cursor-edge" d="M617 273v24M605 285h24"/>
                        <path class="cursor-core" d="M617 274v22M606 285h22"/>
                    </g>
                </svg>
            </div>

            <!-- 快捷工具条 -->
            <div class="quick-bar">
                <div class="quick-edit">
                    <button class="tool" aria-label="变换"><svg><use href="#boxes"/></svg></button>
                    <button class="tool" aria-label="转换参考"><svg><use href="#convert"/></svg></button>
                    <button class="tool" aria-label="隐藏"><svg><use href="#diamonds"/></svg></button>
                    <button class="tool" aria-label="编辑显示"><svg><use href="#palette"/></svg></button>
                    <button class="tool" aria-label="删除"><svg><use href="#delete"/></svg></button>
                    <button class="tool" aria-label="阵列"><svg><use href="#multi"/></svg></button>
                    <button class="tool" aria-label="水平尺寸"><svg><use href="#dim-h"/></svg></button>
                    <button class="tool" aria-label="竖直尺寸"><svg><use href="#dim-v"/></svg></button>
                    <button class="tool" aria-label="垂直尺寸"><svg><use href="#dim-p"/></svg></button>
                    <button class="tool" aria-label="角度尺寸"><svg><use href="#dim-a"/></svg></button>
                </div>
                <div class="quick-con">
                    <button class="tool" aria-label="平行"><svg><use href="#parallel"/></svg></button>
                    <button class="tool" aria-label="垂直"><svg><use href="#perp"/></svg></button>
                    <button class="tool marked" aria-label="水平"><svg><use href="#horiz"/></svg></button>
                    <button class="tool" aria-label="竖直"><svg><use href="#vert"/></svg></button>
                    <button class="tool" aria-label="等长"><svg><use href="#equal"/></svg></button>
                    <button class="tool" aria-label="定角"><svg><use href="#angle"/></svg></button>
                    <button class="tool" aria-label="定长"><svg><use href="#width"/></svg></button>
                    <button class="tool" aria-label="固定"><svg><use href="#drop"/></svg></button>
                    <button class="tool" aria-label="信息"><svg><use href="#info"/></svg></button>
                </div>
            </div>
        </section>

        <aside class="navigator">
            <h2 class="nav-title"><span class="pin"></span>部件导航器</h2>
            <div class="tree-head">名称<span class="sort"></span></div>
            <ul class="tree">
                <li><span class="expand">+</span><svg><use href="#view"/></svg>模型视图</li>
                <li><span class="expand">+</span><svg><use href="#tick"/></svg><svg><use href="#camera"/></svg>摄像机</li>
                <li><span class="expand">+</span><svg><use href="#folder"/></svg>用户表达式</li>
                <li><span class="expand">-</span><svg><use href="#folder"/></svg>模型历史记录</li>
                <li class="child"><svg><use href="#view"/></svg>基准坐标系 (0)</li>
                <li class="child current"><svg><use href="#sketch"/></svg>草图 (1) "SK...</li>
            </ul>
            <h3 class="fold">相关性</h3>
            <h3 class="fold fold-detail">细节</h3>
            <table class="details">
                <thead>
                    <tr><th class="col-param">参数</th><th class="col-value">值</th><th>表达式<span class="sort"></span></th></tr>
                </thead>
                <tbody>
                    <tr><td></td><td></td><td></td></tr>
                    <tr><td></td><td></td><td></td></tr>
                    <tr><td></td><td></td><td></td></tr>
                    <tr><td></td><td></td><td></td></tr>
                </tbody>
            </table>
            <div class="rest"></div>
            <h3 class="fold fold-last">相关性</h3>
        </aside>
    </main>
</body>
</html>
```
FILE: styles.css
```css
* {
    box-sizing: border-box;
}
body {
    margin: 0;
    padding: 3px 3px 4px;
    height: 100vh;
    display: flex;
    flex-direction: column;
    overflow: hidden;
    background: #fff;
    color: #333;
    font-family: "Noto Sans", "Noto Sans CJK SC", sans-serif;
    font-size: 12px;
}
button {
    border: 0;
    padding: 0;
    background: none;
    font: inherit;
    color: inherit;
}
svg {
    display: block;
    flex: none;
}
.icon-defs {
    position: absolute;
    width: 0;
    height: 0;
}

/* 菜单栏 */
.menu-bar {
    display: flex;
    align-items: flex-end;
    flex: none;
    gap: 9px;
    height: 14px;
    padding-bottom: 3px;
    overflow: hidden;
    background: #569fb8;
}
.menu-bar a {
    color: #173a48;
    line-height: 16px;
    text-decoration: none;
    white-space: nowrap;
}
.menu-bar .menu-pref {
    margin-left: 6px;
}

/* 工具条 */
.toolbar {
    display: flex;
    align-items: center;
    flex: none;
    height: 26px;
    border-bottom: 1px solid #e6e6e6;
}
.toolbar-sketch {
    align-self: flex-start;
    padding-left: 5px;
    border-right: 1px solid #e6e6e6;
}
.toolbar-select {
    height: 24px;
    margin-top: 27px;
    padding-bottom: 2px;
    border-bottom: 1px solid #9c9c9c;
}
.tool {
    display: flex;
    align-items: center;
    justify-content: center;
    flex: none;
    width: 22px;
    height: 22px;
}
.tool svg {
    width: 17px;
    height: 17px;
}
.tool.on {
    background: #cbe6ec;
}
.constraints,
.snaps {
    display: flex;
}
.constraints .tool {
    width: 23px;
}
.toolbar-select .tool {
    width: 16px;
    height: 16px;
}
.toolbar-select .snaps .tool {
    width: 17px;
}
.toolbar-select .tool svg {
    width: 14px;
    height: 14px;
}
.arrow {
    display: flex;
    align-items: center;
    justify-content: center;
    flex: none;
    width: 12px;
    height: 22px;
}
.arrow.low {
    padding-top: 8px;
}
.toolbar-select .arrow {
    width: 10px;
}
.arrow::before,
.combo::after {
    content: "";
    border: 3px solid transparent;
    border-top: 4px solid #111;
    border-bottom: 0;
}
.sep {
    flex: none;
    width: 1px;
    height: 22px;
    margin: 0 2px;
    background: #e2e2e2;
}
.handle {
    flex: none;
    width: 2px;
    height: 22px;
    margin: 0 2px 0 3px;
    border-left: 2px dotted #bbb;
}
.combo {
    position: relative;
    flex: none;
    height: 18px;
    border: 1px solid #b4b4b4;
}
.combo::after {
    position: absolute;
    right: 5px;
    top: 6px;
}
.combo select {
    appearance: none;
    display: block;
    width: 100%;
    height: 16px;
    padding: 0 14px 0 1px;
    border: 0;
    background: #fff;
    color: #333;
    font: inherit;
    line-height: 16px;
}
.combo-sketch {
    width: 87px;
    margin-right: 4px;
    border-left: 0;
}
.combo-sketch select {
    padding-left: 0;
}
.combo-filter {
    width: 47px;
    margin-right: 5px;
    border-left: 0;
}
.combo-scope {
    width: 142px;
    margin-right: 3px;
}
.search {
    display: flex;
    align-items: center;
    flex: none;
    width: 126px;
    height: 18px;
    border: 1px solid #b4b4b4;
}
.search input {
    flex: 1;
    min-width: 0;
    height: 16px;
    padding: 0 0 0 1px;
    border: 0;
    color: #333;
    font: inherit;
}
.search svg {
    width: 13px;
    height: 13px;
    margin-right: 2px;
}

/* 工作区 */
.workspace {
    display: flex;
    flex: 1;
    min-height: 0;
}
.editor {
    position: relative;
    display: flex;
    flex-direction: column;
    flex: 1;
    min-width: 0;
}
.tabs {
    display: flex;
    flex: none;
    height: 21px;
    border-bottom: 2px solid #5a9fb2;
}
.tab {
    display: flex;
    align-items: center;
    justify-content: center;
    gap: 4px;
    width: 27px;
    padding-right: 12px;
}
.tab svg {
    width: 9px;
    height: 9px;
}
.tab.active {
    width: auto;
    padding: 0 3px;
    background: #569fb8;
    color: #fff;
    font-size: 13px;
}
.tab .part-icon {
    width: 12px;
    height: 12px;
}
.tab .close {
    color: #a9c9d4;
    font-size: 12px;
}
.canvas {
    flex: 1;
    min-height: 0;
    background: #d1d4d6;
}
.drawing {
    width: 100%;
    height: 100%;
}
.curve {
    fill: none;
    stroke: #1f1fcb;
    stroke-width: 1.5;
}
.picked {
    fill: none;
    stroke: #f2a052;
    stroke-width: 2;
}
.ref-line {
    fill: none;
    stroke: #7478b4;
    stroke-dasharray: 1 2;
}
.dim-line {
    stroke: #5878bc;
}
.dim-head {
    fill: #3c68b4;
}
.eq-marks {
    fill: none;
    stroke: #4468b8;
    stroke-width: 1.3;
}
.points {
    fill: #1414c8;
}
.point-cores {
    fill: #f0c8c8;
}
.csys-plane {
    fill: #a5c0d1;
    stroke: #1c86d4;
    stroke-width: 1.5;
}
.csys-thin {
    fill: none;
    stroke: #8180c6;
}
.axis-names {
    font-size: 10px;
    text-anchor: middle;
}
.cursor {
    fill: none;
    stroke: #333;
}
.cursor circle {
    stroke-dasharray: 10 4;
}
.cursor-edge {
    stroke-width: 3;
}
.cursor-core {
    stroke: #ddd;
}
.watermark {
    fill: #a7aaac;
    filter: drop-shadow(0 0 2px #dfe2e3) drop-shadow(0 0 3px #dfe2e3);
}
.wm-label {
    font-family: "Noto Sans CJK SC", sans-serif;
    font-size: 30px;
    font-weight: 900;
    stroke: #a7aaac;
    stroke-width: 2;
}
.wm-name {
    font-family: "Liberation Serif", serif;
    font-size: 39px;
}

/* 快捷工具条 */
.quick-bar {
    position: absolute;
    top: 105px;
    left: 628px;
    z-index: 1;
    display: flex;
    padding: 1px;
    border: 1px solid #c4c4c4;
    background: #fff;
    box-shadow: 1px 1px 3px rgba(0, 0, 0, 0.2);
}
.quick-edit {
    display: grid;
    grid-template-columns: repeat(5, 23px);
    border-right: 1px solid #e2e2e2;
}
.quick-con {
    display: grid;
    grid-template-columns: repeat(8, 23px);
}
.quick-bar .tool {
    width: 23px;
}
.quick-bar .tool svg {
    width: 16px;
    height: 16px;
}
.quick-bar .marked {
    align-items: flex-start;
    width: 27px;
    height: 30px;
    margin: 0 -2px -8px;
    border: 3px solid #cc2222;
    box-shadow: 1px 2px 3px rgba(0, 0, 0, 0.5);
}

/* 部件导航器 */
.navigator {
    display: flex;
    flex-direction: column;
    flex: none;
    width: 156px;
    padding-left: 6px;
    overflow: hidden;
    border-left: 1px solid #b4b4b4;
    border-right: 1px solid #ddd;
}
.nav-title {
    display: flex;
    align-items: center;
    gap: 9px;
    flex: none;
    height: 25px;
    margin: 0;
    padding-left: 3px;
    font-size: 12px;
    font-weight: normal;
}
.pin {
    width: 10px;
    height: 10px;
    border: 1px solid #222;
    border-top-width: 2px;
}
.tree-head {
    display: flex;
    align-items: center;
    gap: 14px;
    flex: none;
    height: 20px;
    padding-left: 5px;
    border: 1px solid #ddd;
    background: #f0f0f0;
}
.sort {
    display: inline-block;
    border: 4px solid transparent;
    border-top: 0;
    border-bottom: 5px solid #222;
}
.tree {
    flex: none;
    height: 233px;
    margin: 0;
    padding: 0;
    border-left: 1px solid #ddd;
    background: repeating-linear-gradient(#fff 0 18px, #ececec 18px 19px, #f8f8f8 19px 37px, #ececec 37px 38px);
    list-style: none;
}
.tree li {
    display: flex;
    align-items: center;
    gap: 1px;
    height: 19px;
    padding-left: 4px;
    white-space: nowrap;
}
.tree svg {
    width: 12px;
    height: 12px;
    margin-right: 1px;
}
.expand {
    width: 9px;
    line-height: 16px;
}
.tree .child {
    padding-left: 43px;
}
.tree .current {
    padding-left: 46px;
    font-weight: bold;
}
.fold {
    display: flex;
    align-items: center;
    flex: none;
    height: 25px;
    margin: 0;
    padding-left: 5px;
    border-top: 3px solid #bbb;
    color: #1f7391;
    font-size: 15px;
    font-weight: normal;
    line-height: 20px;
}
.fold-detail {
    height: 27px;
    padding-bottom: 4px;
    border-top: 1px solid #ccc;
}
.fold-last {
    height: 23px;
}
.details {
    flex: none;
    margin-left: 5px;
    border-collapse: collapse;
    table-layout: fixed;
}
.details th {
    height: 21px;
    padding: 0 0 0 5px;
    border: 1px solid #ddd;
    background: #f0f0f0;
    font-weight: normal;
    text-align: left;
    white-space: nowrap;
}
.details td {
    height: 19px;
    padding: 0;
    border: 1px solid #ececec;
}
.details .sort {
    margin-left: 6px;
    vertical-align: 2px;
}
.details tbody tr:nth-child(even) {
    background: #f8f8f8;
}
.col-param {
    width: 47px;
}
.col-value {
    width: 29px;
}
.rest {
    flex: 1;
    border-left: 1px solid #e4e4e4;
    background: repeating-linear-gradient(#fff 0 28px, #f8f8f8 28px 47px, #fff 47px 66px, #f8f8f8 66px 85px, #fff 85px 94px);
}
```
